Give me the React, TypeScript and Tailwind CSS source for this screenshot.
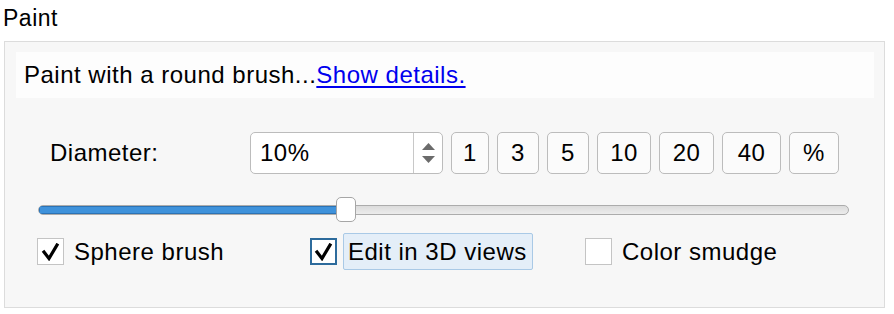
import React from "react";

const font = { fontFamily: '"Liberation Sans", Arial, sans-serif' };

const Check = () => (
   <svg width="19" height="18" viewBox="0 0 19 18">
      <polyline
         points="3,9 8,15.5 16,2"
         fill="none"
         stroke="black"
         strokeWidth="3.2"
         strokeLinecap="square"
         strokeLinejoin="miter"
      />
   </svg>
);

const CheckBox = ({ checked, focused }: { checked: boolean; focused?: boolean }) => (
   <div
      className={
         "w-[27px] h-[27px] bg-white flex items-center justify-center shrink-0 " +
         (focused ? "border-2 border-[#2d6b9c]" : "border border-[#c4c4c4]")
      }
   >
      {checked && <Check />}
   </div>
);

const presets = [
   { label: "1", w: "w-[38px]" },
   { label: "3", w: "w-[42px]" },
   { label: "5", w: "w-[42px]" },
   { label: "10", w: "w-[54px]" },
   { label: "20", w: "w-[55px]" },
   { label: "40", w: "w-[59px]" },
   { label: "%", w: "w-[50px]" },
];

const App = () => {
   return (
      <div
         className="w-[894px] h-[314px] bg-white text-black overflow-hidden tracking-[0.5px]"
         style={font}
      >
         <div className="pl-[3px] pt-[6px] text-[23px] leading-[24px]">Paint</div>

         <div className="ml-[4px] mt-[11px] w-[881px] h-[267px] border border-[#dcdcdc] bg-[#f7f7f7] flex flex-col">
            <div className="ml-[11px] mt-[10px] w-[858px] h-[46px] bg-[#fdfdfd] flex items-center pl-[8px] text-[24px]">
               <span>Paint with a round brush...</span>
               <a className="text-[#0000ee] underline underline-offset-[3px] decoration-[1.5px]">
                  Show details.
               </a>
            </div>

            <div className="ml-[45px] mt-[34px] flex items-center h-[42px] text-[24px]">
               <div className="w-[200px]">Diameter:</div>
               <div className="w-[193px] h-[42px] border border-[#bcbcbc] rounded-[5px] bg-white flex">
                  <div className="flex-1 flex items-center pl-[9px]">10%</div>
                  <div className="w-[29px] border-l border-[#c8c8c8] flex flex-col items-center justify-center gap-[6px]">
                     <svg width="13" height="7" viewBox="0 0 13 7">
                        <polygon points="6.5,0 13,7 0,7" fill="#6b6b6b" />
                     </svg>
                     <svg width="13" height="7" viewBox="0 0 13 7">
                        <polygon points="0,0 13,0 6.5,7" fill="#6b6b6b" />
                     </svg>
                  </div>
               </div>
               <div className="ml-[8px] flex gap-[8px]">
                  {presets.map((p) => (
                     <div
                        key={p.label}
                        className={
                           p.w +
                           " h-[42px] border border-[#bcbcbc] rounded-[5px] bg-[#fbfbfb] flex items-center justify-center"
                        }
                     >
                        {p.label}
                     </div>
                  ))}
               </div>
            </div>

            <div className="ml-[33px] mt-[23px] w-[811px] h-[25px] relative flex items-center">
               <div className="w-full h-[10px] rounded-full border border-[#acacac] bg-gradient-to-b from-[#dcdcdc] to-[#ececec] overflow-hidden">
                  <div className="w-[308px] h-full bg-[#3f92db] border-r border-[#2a6fb0] shadow-[inset_0_0_0_1px_#2c73b5]" />
               </div>
               <div className="absolute left-[298px] top-0 w-[20px] h-[25px] rounded-[5px] border border-[#a6a6a6] bg-white" />
            </div>

            <div className="ml-[32px] mt-[11px] flex items-center h-[37px] text-[24px]">
               <CheckBox checked />
               <span className="ml-[10px] w-[236px]">Sphere brush</span>
               <CheckBox checked focused />
               <div className="ml-[6px] h-[37px] w-[190px] bg-[#e4eef8] border border-[#a9c9e6] rounded-[2px] flex items-center pl-[4px]">
                  Edit in 3D views
               </div>
               <div className="ml-[52px]">
                  <CheckBox checked={false} />
               </div>
               <span className="ml-[10px]">Color smudge</span>
            </div>
         </div>
      </div>
   );
};

export default App;
